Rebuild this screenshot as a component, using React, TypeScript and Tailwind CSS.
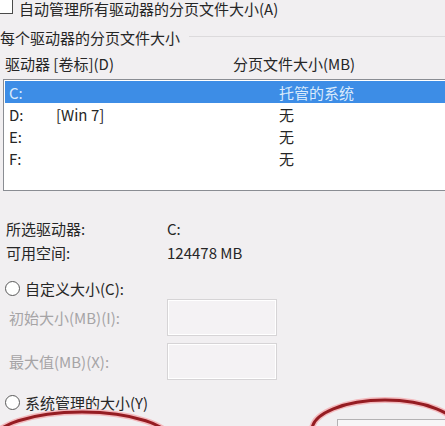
import React from 'react'

const font = { fontFamily: '"Noto Sans CJK SC", "Noto Sans", sans-serif' }

interface DriveRow {
  drive: string
  label: string
  size: string
  selected?: boolean
}

const rows: DriveRow[] = [
  { drive: 'C:', label: '', size: '托管的系统', selected: true },
  { drive: 'D:', label: '[Win 7]', size: '无' },
  { drive: 'E:', label: '', size: '无' },
  { drive: 'F:', label: '', size: '无' },
]

const Radio = () => (
  <span className="w-[15px] h-[15px] rounded-full border border-[#5a5a5a] bg-white shrink-0" />
)

export default function App() {
  return (
    <div
      className="relative w-[445px] h-[426px] overflow-hidden bg-[#f1eff1] text-[15px] text-[#262626] leading-none"
      style={font}
    >
      {/* auto manage checkbox */}
      <div className="flex items-center h-[15px]">
        <span className="w-[15px] h-[15px] -ml-[2px] -mt-[2px] border border-[#4a4a4a] bg-white shrink-0" />
        <span className="ml-[6px] pt-[1px]">自动管理所有驱动器的分页文件大小(A)</span>
      </div>

      {/* group heading */}
      <div className="flex items-center h-[16px] mt-[14px]">
        <span className="whitespace-nowrap">每个驱动器的分页文件大小</span>
        <div className="flex-1 ml-[9px] mt-[-2px] border-t border-[#dcdadc]" />
      </div>

      {/* column headers */}
      <div className="flex items-center h-[16px] mt-[10px] pl-[5px]">
        <span className="w-[228px]">驱动器 [卷标](D)</span>
        <span>分页文件大小(MB)</span>
      </div>

      {/* drive list */}
      <div className="ml-[3px] mt-[8px] w-[470px] h-[112px] border border-[#8a8d93] bg-white pt-[1px] pl-[1px]">
        {rows.map(r => (
          <div
            key={r.drive}
            className={`flex items-center h-[22px] pl-[4px] ${r.selected ? 'bg-[#3d8de6] text-[#d9eafc]' : ''}`}
          >
            <span className="w-[47px]">{r.drive}</span>
            <span className="w-[223px]">{r.label}</span>
            <span>{r.size}</span>
          </div>
        ))}
      </div>

      {/* selected drive info */}
      <div className="flex items-center h-[16px] mt-[29px] pl-[6px]">
        <span className="w-[161px]">所选驱动器:</span>
        <span>C:</span>
      </div>
      <div className="flex items-center h-[16px] mt-[8px] pl-[6px]">
        <span className="w-[161px]">可用空间:</span>
        <span>124478 MB</span>
      </div>

      {/* custom size */}
      <div className="flex items-center h-[16px] mt-[20px] pl-[5px]">
        <Radio />
        <span className="ml-[5px]">自定义大小(C):</span>
      </div>
      <div className="flex items-center mt-[3px] pl-[9px] text-[#a6a4a6]">
        <span className="w-[158px]">初始大小(MB)(I):</span>
        <div className="w-[110px] h-[37px] border border-[#d6d4d6] bg-[#f4f2f4] shadow-[inset_0_0_0_1px_#ffffff]" />
      </div>
      <div className="flex items-center mt-[7px] pl-[9px] text-[#a6a4a6]">
        <span className="w-[158px]">最大值(MB)(X):</span>
        <div className="w-[110px] h-[37px] border border-[#d6d4d6] bg-[#f4f2f4] shadow-[inset_0_0_0_1px_#ffffff]" />
      </div>

      {/* system managed */}
      <div className="flex items-center h-[16px] mt-[14px] pl-[5px]">
        <Radio />
        <span className="ml-[5px]">系统管理的大小(Y)</span>
      </div>

      {/* partially visible button */}
      <div className="absolute left-[337px] top-[419px] w-[130px] h-[30px] border border-[#b4b2b4] bg-[#f7f6f7]" />

      {/* red annotation ellipses */}
      <svg className="absolute inset-0 pointer-events-none" width="445" height="426" viewBox="0 0 445 426">
        <ellipse cx="82" cy="442" rx="90" ry="30" fill="none" stroke="#f3b9bd" strokeWidth="6" />
        <ellipse cx="82" cy="442" rx="90" ry="30" fill="none" stroke="#951c22" strokeWidth="3" />
        <ellipse cx="385" cy="430" rx="73" ry="30" fill="none" stroke="#f3b9bd" strokeWidth="6" />
        <ellipse cx="385" cy="430" rx="73" ry="30" fill="none" stroke="#951c22" strokeWidth="3" />
      </svg>
    </div>
  )
}
